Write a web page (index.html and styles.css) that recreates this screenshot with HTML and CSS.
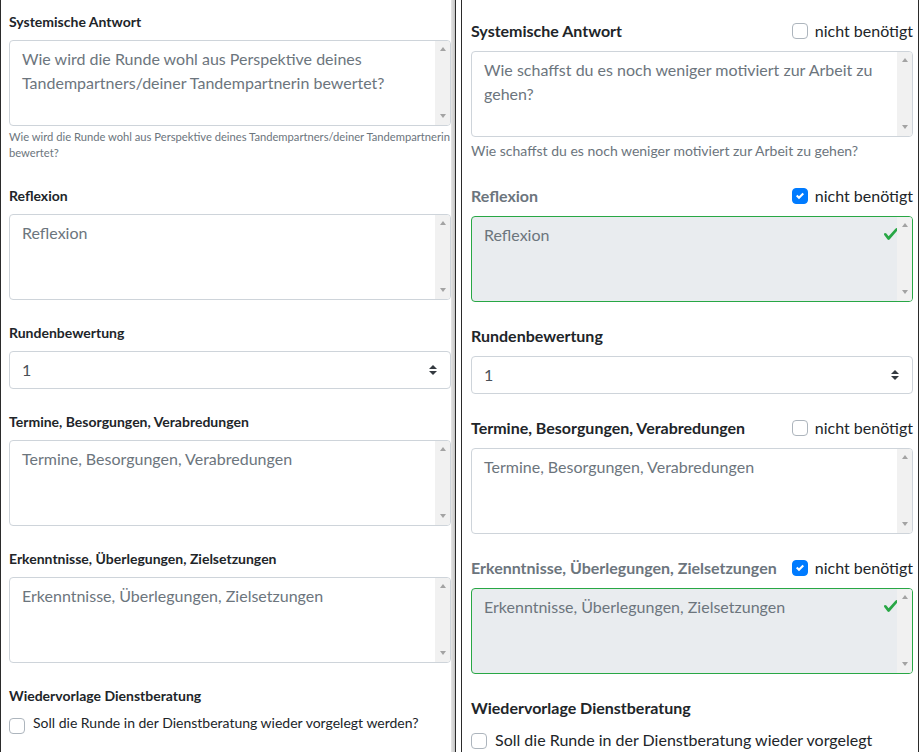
FILE: index.html
```html
<!DOCTYPE html>
<html lang="de">
<head>
<meta charset="utf-8">
<title>Runde</title>
<link rel="stylesheet" href="styles.css">
</head>
<body>
<div class="screen">
  <section class="pane pane-left">
    <div class="group">
      <label class="lbl">Systemische Antwort</label>
      <div class="ta-wrap">
        <textarea class="ta" placeholder="Wie wird die Runde wohl aus Perspektive deines Tandempartners/deiner Tandempartnerin bewertet?"></textarea>
        <div class="sbar"><span class="arr up"></span><span class="arr down"></span></div>
      </div>
      <small class="help">Wie wird die Runde wohl aus Perspektive deines Tandempartners/deiner Tandempartnerin bewertet?</small>
    </div>
    <div class="group">
      <label class="lbl">Reflexion</label>
      <div class="ta-wrap">
        <textarea class="ta" placeholder="Reflexion"></textarea>
        <div class="sbar"><span class="arr up"></span><span class="arr down"></span></div>
      </div>
    </div>
    <div class="group">
      <label class="lbl">Rundenbewertung</label>
      <div class="select-wrap">
        <select class="sel"><option>1</option></select>
        <svg class="sel-icon" viewBox="0 0 4 5" width="8" height="10"><path d="M2 0L0 2h4zm0 5L0 3h4z" fill="#343a40"/></svg>
      </div>
    </div>
    <div class="group">
      <label class="lbl">Termine, Besorgungen, Verabredungen</label>
      <div class="ta-wrap">
        <textarea class="ta" placeholder="Termine, Besorgungen, Verabredungen"></textarea>
        <div class="sbar"><span class="arr up"></span><span class="arr down"></span></div>
      </div>
    </div>
    <div class="group">
      <label class="lbl">Erkenntnisse, Überlegungen, Zielsetzungen</label>
      <div class="ta-wrap">
        <textarea class="ta" placeholder="Erkenntnisse, Überlegungen, Zielsetzungen"></textarea>
        <div class="sbar"><span class="arr up"></span><span class="arr down"></span></div>
      </div>
    </div>
    <div class="group">
      <label class="lbl">Wiedervorlage Dienstberatung</label>
      <div class="check-row">
        <span class="cb"></span>
        <span class="check-text">Soll die Runde in der Dienstberatung wieder vorgelegt werden?</span>
      </div>
    </div>
  </section>

  <section class="pane pane-right">
    <div class="group">
      <div class="lbl-row">
        <label class="lbl">Systemische Antwort</label>
        <span class="need"><span class="cb"></span>nicht benötigt</span>
      </div>
      <div class="ta-wrap">
        <textarea class="ta" placeholder="Wie schaffst du es noch weniger motiviert zur Arbeit zu gehen?"></textarea>
        <div class="sbar"><span class="arr up"></span><span class="arr down"></span></div>
      </div>
      <small class="help">Wie schaffst du es noch weniger motiviert zur Arbeit zu gehen?</small>
    </div>
    <div class="group">
      <div class="lbl-row">
        <label class="lbl muted">Reflexion</label>
        <span class="need"><span class="cb checked"><svg viewBox="0 0 8 8" width="8" height="8"><path d="M6.564.75l-3.59 3.612-1.538-1.55L0 4.26 2.974 7.25 8 2.193z" fill="#fff"/></svg></span>nicht benötigt</span>
      </div>
      <div class="ta-wrap">
        <textarea class="ta valid" placeholder="Reflexion" disabled></textarea>
        <svg class="valid-icon" viewBox="0 0 8 8" width="16" height="16"><path d="M2.3 6.73L.6 4.53c-.4-1.04.46-1.4 1.1-.8l1.1 1.4 3.4-3.8c.6-.63 1.6-.27 1.2.7l-4 4.6c-.43.5-.8.4-1.1.1z" fill="#28a745"/></svg>
        <div class="sbar"><span class="arr up"></span><span class="arr down"></span></div>
      </div>
    </div>
    <div class="group">
      <label class="lbl">Rundenbewertung</label>
      <div class="select-wrap">
        <select class="sel"><option>1</option></select>
        <svg class="sel-icon" viewBox="0 0 4 5" width="8" height="10"><path d="M2 0L0 2h4zm0 5L0 3h4z" fill="#343a40"/></svg>
      </div>
    </div>
    <div class="group">
      <div class="lbl-row">
        <label class="lbl">Termine, Besorgungen, Verabredungen</label>
        <span class="need"><span class="cb"></span>nicht benötigt</span>
      </div>
      <div class="ta-wrap">
        <textarea class="ta" placeholder="Termine, Besorgungen, Verabredungen"></textarea>
        <div class="sbar"><span class="arr up"></span><span class="arr down"></span></div>
      </div>
    </div>
    <div class="group">
      <div class="lbl-row">
        <label class="lbl muted">Erkenntnisse, Überlegungen, Zielsetzungen</label>
        <span class="need"><span class="cb checked"><svg viewBox="0 0 8 8" width="8" height="8"><path d="M6.564.75l-3.59 3.612-1.538-1.55L0 4.26 2.974 7.25 8 2.193z" fill="#fff"/></svg></span>nicht benötigt</span>
      </div>
      <div class="ta-wrap">
        <textarea class="ta valid" placeholder="Erkenntnisse, Überlegungen, Zielsetzungen" disabled></textarea>
        <svg class="valid-icon" viewBox="0 0 8 8" width="16" height="16"><path d="M2.3 6.73L.6 4.53c-.4-1.04.46-1.4 1.1-.8l1.1 1.4 3.4-3.8c.6-.63 1.6-.27 1.2.7l-4 4.6c-.43.5-.8.4-1.1.1z" fill="#28a745"/></svg>
        <div class="sbar"><span class="arr up"></span><span class="arr down"></span></div>
      </div>
    </div>
    <div class="group">
      <label class="lbl">Wiedervorlage Dienstberatung</label>
      <div class="check-row">
        <span class="cb"></span>
        <span class="check-text">Soll die Runde in der Dienstberatung wieder vorgelegt werden?</span>
      </div>
    </div>
  </section>
</div>
</body>
</html>
```

FILE: styles.css
```css
* { box-sizing: border-box; }

html, body {
  margin: 0;
  padding: 0;
  background: #fff;
  font-family: Lato, "Liberation Sans", sans-serif;
  color: #212529;
}

.screen {
  display: flex;
  align-items: stretch;
  height: 752px;
  overflow: hidden;
}

.pane {
  width: 456px;
  flex: none;
  overflow: hidden;
  border-left: 1px solid #2b2b2b;
  border-right: 1px solid #2b2b2b;
}

.pane-left {
  padding: 11px 4px 0 8px;
  background: linear-gradient(to right, #fff calc(100% - 4px), #e6e6e6 calc(100% - 4px), #c4c4c4 100%);
}

.pane-right {
  margin-left: 5px;
  width: 458px;
  padding: 19px 5px 0 9px;
}

.group {
  display: flex;
  flex-direction: column;
  margin-bottom: 22px;
}

.lbl {
  display: block;
  font-weight: 700;
  margin-bottom: 8px;
}

.pane-left .lbl {
  font-size: 14px;
  line-height: 21px;
}

.pane-right .lbl {
  font-size: 16px;
  line-height: 24px;
}

.lbl.muted {
  color: #6c757d;
}

.lbl-row {
  display: flex;
  justify-content: space-between;
  align-items: flex-start;
  margin-bottom: 8px;
}

.lbl-row .lbl {
  margin-bottom: 0;
}

.need {
  display: flex;
  align-items: center;
  gap: 7px;
  font-size: 16px;
  line-height: 24px;
  color: #212529;
  white-space: nowrap;
}

.cb {
  width: 16px;
  height: 16px;
  flex: none;
  border: 1px solid #adb5bd;
  border-radius: 4px;
  background: #fff;
  display: flex;
  align-items: center;
  justify-content: center;
}

.cb.checked {
  background: #007bff;
  border-color: #007bff;
}

.ta-wrap {
  position: relative;
}

.ta {
  display: block;
  width: 100%;
  height: 86px;
  margin: 0;
  padding: 6px 27px 6px 12px;
  font-family: inherit;
  font-size: 16px;
  line-height: 24px;
  color: #495057;
  background: #fff;
  border: 1px solid #ced4da;
  border-radius: 4px;
  resize: none;
  overflow: hidden;
  outline: none;
}

.ta::placeholder {
  color: #6c757d;
  opacity: 1;
}

.ta.valid {
  background: #e9ecef;
  border-color: #28a745;
}

.sbar {
  position: absolute;
  top: 1px;
  right: 1px;
  bottom: 1px;
  width: 15px;
  background: #f1f1f1;
  border-radius: 0 3px 3px 0;
  display: flex;
  flex-direction: column;
  justify-content: space-between;
  align-items: center;
  padding: 6px 0 7px;
}

.arr {
  width: 0;
  height: 0;
  border-left: 3.5px solid transparent;
  border-right: 3.5px solid transparent;
}

.arr.up {
  border-bottom: 4px solid #a3a3a3;
}

.arr.down {
  border-top: 4px solid #a3a3a3;
}

.valid-icon {
  position: absolute;
  top: 10px;
  right: 14px;
}

.help {
  display: block;
  color: #6c757d;
  margin-top: 3px;
}

.pane-left .help {
  font-size: 11.2px;
  line-height: 16px;
  margin-bottom: 2px;
}

.pane-right .help {
  font-size: 14px;
  line-height: 21px;
  margin-bottom: 1px;
}

.select-wrap {
  position: relative;
}

.sel {
  display: block;
  width: 100%;
  height: 38px;
  margin: 0;
  padding: 6px 36px 6px 12px;
  font-family: inherit;
  font-size: 16px;
  line-height: 24px;
  color: #495057;
  background: #fff;
  border: 1px solid #ced4da;
  border-radius: 4px;
  appearance: none;
  -webkit-appearance: none;
  outline: none;
}

.sel-icon {
  position: absolute;
  right: 14px;
  top: 14px;
  pointer-events: none;
}

.check-row {
  display: flex;
  align-items: flex-start;
  gap: 8px;
}

.pane-left .check-row {
  margin-top: -2px;
  font-size: 14px;
  line-height: 21px;
}

.pane-left .check-row .cb {
  margin-top: 6px;
}

.pane-right .check-row {
  font-size: 16px;
  line-height: 24px;
}

.pane-right .check-row .cb {
  margin-top: 5px;
}
```
